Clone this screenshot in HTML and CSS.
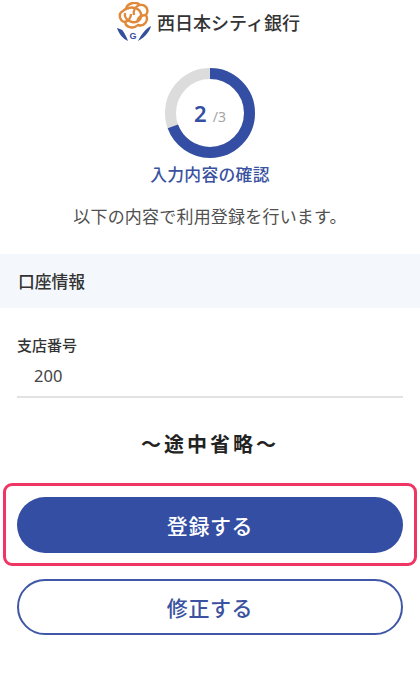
FILE: index.html
```html
<!DOCTYPE html>
<html lang="ja">
<head>
<meta charset="utf-8">
<title>入力内容の確認</title>
<link rel="stylesheet" href="styles.css">
</head>
<body>
<header class="brand">
  <svg class="brand-mark" viewBox="0 0 36 40" width="36" height="40" aria-hidden="true">
    <g fill="none" stroke="#e0893a" stroke-width="2.4">
      <path d="M10 7 C11 1 20 -1 24 3 C31 2 33 9 30 13 C33 19 28 25 22 23 C18 27 10 26 9 20 C3 19 2 11 7 9 C8 8 9 7 10 7Z"/>
      <path d="M11 7 C15 4 24 6 25 12 C26 18 21 21 16 20 C11 19 8 15 9 11"/>
      <path d="M23 3 C19 5 17 9 18 13 M30 13 C26 13 22 15 21 20 M9 20 C12 19 15 16 15 12"/>
    </g>
    <path d="M1 26 C3 27 6 27 7 29 C9 32 11 36 12 39 C7 37 3 32 1 26Z" fill="#33509a"/>
    <path d="M35 24 C34 28 30 35 22 39 C25 33 29 27 35 24Z" fill="#33509a"/>
    <text x="17" y="37" class="brand-g">G</text>
  </svg>
  <span class="brand-name">西日本シティ銀行</span>
</header>

<section class="progress">
  <div class="ring">
    <svg viewBox="0 0 90 90" width="90" height="90" aria-hidden="true">
      <circle cx="45" cy="45" r="39.5" fill="none" stroke="#dcdcdc" stroke-width="11"/>
      <circle cx="45" cy="45" r="39.5" fill="none" stroke="#334ea2" stroke-width="11" pathLength="360" stroke-dasharray="250 110" transform="rotate(-90 45 45)"/>
    </svg>
    <div class="ring-label"><span class="step">2</span><span class="total">/3</span></div>
  </div>
  <h1 class="title">入力内容の確認</h1>
  <p class="lead">以下の内容で利用登録を行います。</p>
</section>

<h2 class="band">口座情報</h2>

<div class="field">
  <div class="field-label">支店番号</div>
  <div class="field-value">200</div>
</div>

<p class="omitted">～途中省略～</p>

<div class="highlight">
  <button class="btn btn-primary" type="button">登録する</button>
</div>
<div class="secondary-wrap">
  <button class="btn btn-outline" type="button">修正する</button>
</div>
</body>
</html>
```
FILE: styles.css
```css
* { box-sizing: border-box; }
html, body { margin: 0; padding: 0; }
body {
  width: 420px;
  height: 683px;
  overflow: hidden;
  background: #fff;
  color: #333;
  font-family: "Noto Sans CJK JP", "Noto Sans", sans-serif;
}
.brand {
  display: flex;
  justify-content: center;
  align-items: center;
  gap: 5px;
  height: 44px;
  padding-right: 4px;
}
.brand-mark { display: block; flex: none; }
.brand-g { font: 700 9px "Liberation Sans", sans-serif; fill: #33509a; text-anchor: middle; }
.brand-name { font-size: 18px; line-height: 24px; font-weight: 500; color: #333; }
.progress { display: flex; flex-direction: column; align-items: center; }
.ring { position: relative; width: 90px; height: 90px; margin-top: 24px; }
.ring svg { display: block; }
.ring-label {
  position: absolute;
  inset: 0;
  display: flex;
  justify-content: center;
  align-items: baseline;
  padding-top: 30px;
  line-height: 30px;
}
.step { font-size: 22px; font-weight: 600; color: #334ea2; font-family: "Noto Sans", sans-serif; }
.total { font-size: 14px; color: #a5a5a5; margin-left: 6px; font-family: "Noto Sans", sans-serif; }
.title {
  margin: 4px 0 0;
  font-size: 16.8px;
  line-height: 24px;
  font-weight: 500;
  letter-spacing: .3px;
  color: #3a52a0;
}
.lead {
  margin: 18px 0 0;
  font-size: 17px;
  line-height: 24px;
  letter-spacing: .2px;
  color: #505050;
}
.band {
  margin: 26px 0 0;
  height: 54px;
  padding-left: 18px;
  display: flex;
  align-items: center;
  background: #f4f8fd;
  font-size: 16.8px;
  font-weight: 500;
  color: #333;
}
.field {
  margin: 25px 17px 0;
  border-bottom: 2px solid #e2e2e2;
  height: 65px;
}
.field-label { font-size: 15px; line-height: 24px; font-weight: 500; color: #333; }
.field-value { font-size: 16.5px; line-height: 24px; margin: 7px 0 0 17px; color: #444; font-family: "Noto Sans", sans-serif; }
.omitted {
  margin: 31px 0 0;
  text-align: center;
  font-size: 20px;
  line-height: 30px;
  font-weight: 700;
  letter-spacing: 3px;
  color: #222;
}
.highlight {
  margin: 24px 3px 0;
  padding: 11px 11px 10px;
  height: 83px;
  border: 3px solid #ee3564;
  border-radius: 9px;
}
.secondary-wrap { margin: 13px 17px 0; }
.btn {
  display: block;
  width: 100%;
  height: 56px;
  border-radius: 28px;
  font-family: inherit;
  font-size: 21px;
  font-weight: 500;
  letter-spacing: .6px;
  padding: 0;
}
.btn-primary { background: #334ea2; border: 0; color: #fff; }
.btn-outline { background: #fff; border: 2px solid #3f57a6; color: #3a52a0; }
```
